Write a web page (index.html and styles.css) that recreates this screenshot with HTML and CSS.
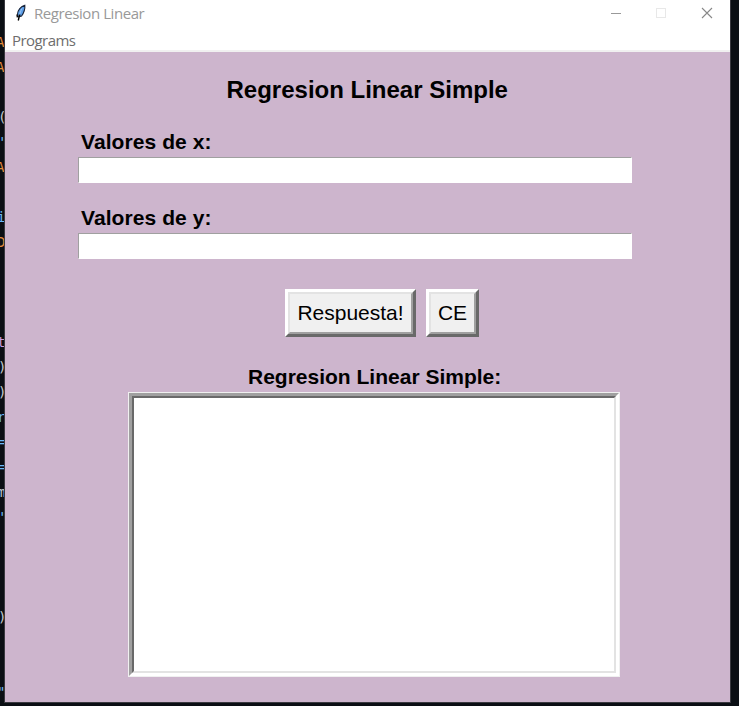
FILE: index.html
```html
<!DOCTYPE html>
<html lang="es">
<head>
<meta charset="utf-8">
<title>Regresion Linear</title>
<link rel="stylesheet" href="styles.css">
</head>
<body>
<div class="desktop">
  <div class="editor" aria-hidden="true">
    <span class="o cut">A</span><span class="o cut">A</span><span></span><span class="w close">(</span><span class="b quote">'</span><span class="o cut">A</span><span></span><span class="b mid">i</span><span class="o mid">D</span><span></span><span></span><span></span><span class="p mid">t</span><span class="w close">)</span><span class="w close">)</span><span class="b mid">r</span><span class="b mid">=</span><span class="b mid">=</span><span class="w mid">m</span><span class="b quote">'</span><span></span><span></span><span></span><span class="w close">)</span><span></span><span></span><span class="b mid">"</span>
  </div>
  <main class="window">
    <header class="titlebar">
      <svg class="feather" width="14" height="18" viewBox="0 0 14 18">
        <path d="M10.8 1.2C7 2.3 3.6 6 3.5 10.2L4.6 12.8 7.6 12C9.7 9 11.2 5 10.8 1.2Z" fill="#5b9ee8" stroke="#182338" stroke-width="1.1"/>
        <path d="M8 4.5C6.8 6.5 6 9 5 12.5" fill="none" stroke="#a9cdf5" stroke-width=".8"/>
        <path d="M6 10.5C5.2 12 4.8 14 4.3 16.5M3 10.5L3.4 13.3" fill="none" stroke="#000" stroke-width="1.4"/>
      </svg>
      <span class="caption">Regresion Linear</span>
      <div class="controls">
        <svg width="45" height="27" viewBox="0 0 45 27"><path d="M16 13.5H26" stroke="#999"/></svg>
        <svg width="45" height="27" viewBox="0 0 45 27"><rect x="16.5" y="8.5" width="9" height="9" fill="none" stroke="#e8e8e8"/></svg>
        <svg width="45" height="27" viewBox="0 0 45 27"><path d="M17 8L27 18M27 8L17 18" stroke="#888" stroke-width="1.1"/></svg>
      </div>
    </header>
    <nav class="menubar"><span>Programs</span></nav>
    <section class="form">
      <h1><span>Regresion Linear Simple</span></h1>
      <label class="label" for="x">Valores de x:</label>
      <input class="entry" id="x" type="text">
      <label class="label second" for="y">Valores de y:</label>
      <input class="entry" id="y" type="text">
      <div class="buttons">
        <button class="btn answer"><span>Respuesta!</span></button>
        <button class="btn clear"><span>CE</span></button>
      </div>
      <h2>Regresion Linear Simple:</h2>
      <div class="output"><div class="sunken"><div class="page"></div></div></div>
    </section>
  </main>
</div>
</body>
</html>
```
FILE: styles.css
```css
* { box-sizing: border-box; }
body {
  margin: 0;
  width: 739px;
  height: 706px;
  overflow: hidden;
  background: #0b0f14;
  font-family: "Liberation Sans", Arial, sans-serif;
  color: #000;
}
.desktop { display: flex; height: 706px; }
.editor {
  flex: 0 0 4px;
  padding-top: 30px;
  overflow: hidden;
  font: 14px/25px "DejaVu Sans Mono", monospace;
}
.editor span { display: block; height: 25px; }
.editor .cut { margin-left: -4px; }
.editor .mid { margin-left: -3px; }
.editor .close { margin-left: -2px; }
.editor .quote { margin-left: -2px; }
.o { color: #e08a3c; }
.b { color: #6ab8f7; }
.w { color: #c0c8d0; }
.p { color: #c79be0; }
.window {
  flex: 0 0 727px;
  height: 703px;
  border: 1px solid #3a3a40;
  border-top: 0;
  background: #cdb5cd;
}
.titlebar {
  display: flex;
  height: 27px;
  background: #fff;
  padding-left: 9px;
}
.feather { margin-top: 4px; }
.caption {
  margin-left: 6px;
  font: 15px/27px "Open Sans", sans-serif;
  letter-spacing: -0.43px;
  color: #999;
}
.controls { display: flex; margin-left: auto; }
.menubar {
  height: 25px;
  padding-left: 7px;
  border-bottom: 2px solid #f0f0f0;
  background: #fff;
  font: 15px/27px "Open Sans", sans-serif;
  letter-spacing: -0.55px;
  color: #6d6d6d;
}
.form { padding: 24px 0 0 73px; }
h1 {
  margin: 0 0 0 148.5px;
  font-size: 24px;
  line-height: 28px;
}
.label {
  display: block;
  margin: 26px 0 3px 3px;
  font-size: 21px;
  font-weight: bold;
  line-height: 24px;
  letter-spacing: 0.08px;
}
.label.second { margin-top: 23px; }
.entry {
  display: block;
  width: 554px;
  height: 26px;
  padding: 0 4px;
  border: 1px solid;
  border-color: #a0a0a0 #fff #fff #a0a0a0;
  outline: 0;
  background: #fff;
  font: 20px "Liberation Sans", sans-serif;
}
.buttons { display: flex; gap: 10px; margin: 30px 0 0 207px; }
.btn {
  height: 48px;
  padding: 0;
  border: 3px solid;
  border-color: #fff #696969 #696969 #fff;
  background: #f0f0f0;
  font: 21px/38px "Liberation Sans", sans-serif;
  color: #000;
}
.btn span {
  display: block;
  height: 42px;
  border: 2px solid;
  border-color: #e3e3e3 #a0a0a0 #a0a0a0 #e3e3e3;
}
.answer { width: 131px; }
.clear { width: 53px; }
h2 {
  margin: 28px 0 3px 170px;
  font-size: 21px;
  line-height: 24px;
}
.output {
  width: 492px;
  height: 285px;
  margin-left: 50px;
  border: 1px solid #f0f0f0;
}
.sunken {
  height: 100%;
  border: 3px solid;
  border-color: #a0a0a0 #fff #fff #a0a0a0;
}
.page {
  height: 100%;
  border: 2px solid;
  border-color: #696969 #e3e3e3 #e3e3e3 #696969;
  background: #fff;
}
```
